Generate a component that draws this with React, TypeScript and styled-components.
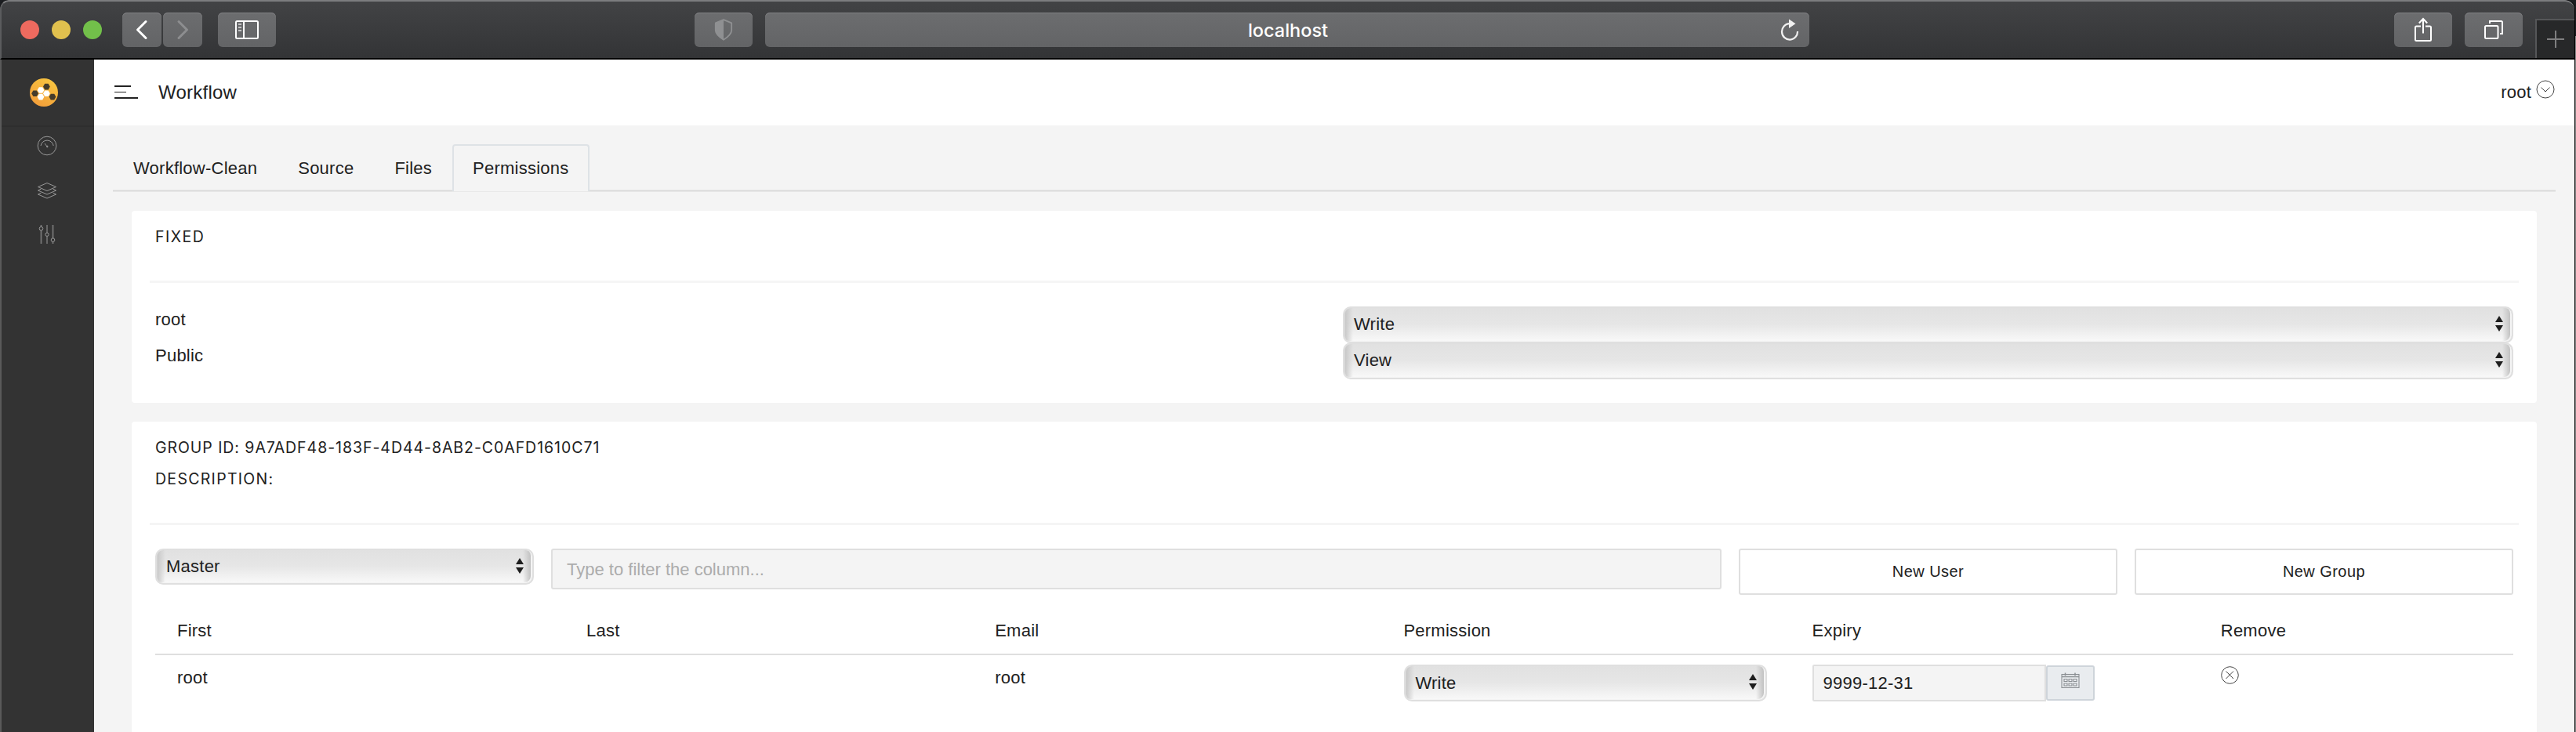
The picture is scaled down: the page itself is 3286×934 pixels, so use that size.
import React from "react";
import styled, { createGlobalStyle, css } from "styled-components";

const GlobalStyle = createGlobalStyle`
  * { box-sizing: border-box; }
  body {
    margin: 0;
    background: #111214;
    overflow: hidden;
    font-family: "Liberation Sans", Arial, sans-serif;
    font-size: 22px;
    letter-spacing: 0.24px;
    color: #212121;
  }
  button, input { font: inherit; letter-spacing: inherit; color: inherit; margin: 0; }
`;

const Desktop = styled.div`
  height: 934px;
  display: flex;
  background: linear-gradient(#1b1d20 0 46px, #8a8a8a 46px);
`;

const Window = styled.div`
  width: 3285px;
  height: 934px;
  display: flex;
  flex-direction: column;
  background: #000;
  border-radius: 11px 12px 0 0;
  overflow: hidden;
  padding-right: 1px;
`;

/* ---- browser chrome ---- */

const Toolbar = styled.header`
  height: 76px;
  flex: none;
  display: flex;
  align-items: flex-start;
  padding: 14px 0 0 24px;
  border-top: 2px solid #7c7d7f;
  border-left: 2px solid #5b5c5e;
  border-bottom: 2px solid #000;
  border-radius: 11px 12px 0 0;
  background: linear-gradient(#424345, #333436);
  color: #fff;
`;

const Light = styled.span<{ $color: string }>`
  width: 24px;
  height: 24px;
  margin: 10px 16px 0 0;
  border-radius: 50%;
  background: ${(p) => p.$color};
`;

const chromeSurface = css`
  height: 44px;
  border: 0;
  border-radius: 6px;
  background: linear-gradient(#6c6d6f, #636466);
  box-shadow: inset 0 1px 0 #808183;
`;

const ChromeButton = styled.button<{ $w: number; $gap?: number }>`
  ${chromeSurface}
  width: ${(p) => p.$w}px;
  margin-left: ${(p) => p.$gap ?? 0}px;
  padding: 0;
  display: flex;
  align-items: center;
  justify-content: center;
`;

const AddressBar = styled.div`
  ${chromeSurface}
  width: 1332px;
  margin-left: 16px;
  display: grid;
  grid-template-columns: 46px 1fr 44px;
  align-items: center;
  text-align: center;
  font-family: Inter, "Liberation Sans", sans-serif;
  font-size: 23.5px;
  font-weight: 500;
  letter-spacing: 0;
`;

const Reload = styled.svg`
  grid-column: 3;
  margin: 0 0 0 7px;
`;

const NewTab = styled.button`
  width: 50px;
  height: 50px;
  margin: 8px 0 0 16px;
  padding: 0;
  border: 0;
  border-top: 2px solid #555658;
  border-left: 2px solid #555658;
  background: #272829;
  display: flex;
  align-items: center;
  justify-content: center;
`;

/* ---- application shell ---- */

const Shell = styled.div`
  flex: 1;
  min-height: 0;
  display: flex;
`;

const Sidebar = styled.nav`
  width: 120px;
  border-left: 2px solid #5a5a5a;
  background: #333;
  display: flex;
  flex-direction: column;
`;

const Brand = styled.div`
  height: 86px;
  border-bottom: 2px solid #2e2e2e;
  padding: 24px 0 0 36px;
`;

const SideLinks = styled.div`
  display: flex;
  flex-direction: column;
  align-items: center;
  padding-right: 3px;
`;

const SideIcon = styled.svg`
  width: 30px;
  height: 30px;
  margin: 9px 0 18px;
  fill: none;
  stroke: #9a9a9a;
  stroke-width: 1;

  & + & { margin-top: 9px; margin-bottom: 17px; }
`;

const Main = styled.main`
  flex: 1;
  min-width: 0;
  display: flex;
  flex-direction: column;
  background: #f4f4f4;
`;

const PageHeader = styled.div`
  height: 84px;
  flex: none;
  display: flex;
  align-items: center;
  padding: 0 25px 0 26px;
  background: #fff;
`;

const PageTitle = styled.h1`
  flex: 1;
  margin: 0 0 0 26px;
  font-size: 24px;
  font-weight: 400;
  line-height: 28px;
`;

const UserMenu = styled.div`
  display: flex;
  align-items: center;
  gap: 6px;
  line-height: 26px;

  svg { margin-bottom: 8px; }
`;

const Tabs = styled.div`
  height: 61px;
  flex: none;
  margin: 24px 24px 0;
  display: flex;
  align-items: flex-start;
  background: linear-gradient(
    transparent 58px, #e8e8e8 58px 59px, #d8d8d8 59px 60px, #e8e8e8 60px
  );
`;

const Tab = styled.a<{ $active?: boolean }>`
  height: 60px;
  padding: 0 24px;
  border: 2px solid transparent;
  border-bottom: 0;
  border-radius: 4px 4px 0 0;
  line-height: 57px;
  ${(p) =>
    p.$active &&
    css`
      border-color: #dee2e6;
      background: #f4f4f4;
    `}
`;

const Card = styled.section<{ $grow?: boolean }>`
  margin: 24px 48px 0;
  padding: 0 30px;
  border-radius: 4px;
  background: #fff;
  ${(p) => (p.$grow ? "flex: 1; border-radius: 4px 4px 0 0;" : "height: 245px; flex: none;")}
`;

const CardHead = styled.div<{ $h: number }>`
  height: ${(p) => p.$h}px;
  margin: 0 -7px;
  padding: 13px 7px 0;
  border-bottom: 3px solid #f5f5f5;
`;

const CardTitle = styled.h2<{ $spacing: number }>`
  margin: 0;
  font-family: Inter, "Liberation Sans", sans-serif;
  font-size: 19.5px;
  font-weight: 400;
  line-height: 40px;
  letter-spacing: ${(p) => p.$spacing}px;
  text-transform: uppercase;
  white-space: nowrap;
`;

const Row = styled.div<{ $top?: number }>`
  display: flex;
  align-items: flex-start;
  margin: ${(p) => p.$top ?? 0}px -11px 0;
`;

const Col = styled.div<{ $span: number }>`
  width: ${(p) => (p.$span / 12) * 100}%;
  padding: 0 11px;
`;

const Label = styled.div`
  line-height: 34px;
  height: 46px;
`;

const SelectBox = styled.button<{ $h?: number }>`
  width: 100%;
  height: ${(p) => p.$h ?? 47}px;
  display: flex;
  align-items: center;
  justify-content: space-between;
  margin-bottom: -1px;
  padding: 0 11px 1px 12px;
  border: 2px solid #dfdfdf;
  border-radius: 10px;
  text-align: left;
  background:
    linear-gradient(to right, #c6c6c6, rgba(214, 214, 214, 0)) 0 0 / 11px 100% no-repeat padding-box,
    linear-gradient(to left, #c2c2c2 2px, rgba(214, 214, 214, 0)) 100% 0 / 12px 100% no-repeat padding-box,
    linear-gradient(#e1e1e1, #e6e6e6 48%, #f9f9f9) padding-box;
  box-shadow: inset -2px -1px 0 #f4f4f4, inset 1px 0 0 #d4d4d4;

  svg { margin-bottom: 2px; }
`;

const FilterInput = styled.input`
  display: block;
  width: 100%;
  height: 52px;
  padding: 2px 19px 0 18px;
  border: 2px solid #dfdfdf;
  border-radius: 3px;
  background: #f4f4f4;
  letter-spacing: 0;
  &::placeholder { color: #acacac; opacity: 1; }
`;

const OutlineButton = styled.button`
  width: 100%;
  height: 59px;
  padding: 0 0 1px;
  border: 2px solid #dfdfdf;
  border-radius: 3px;
  background: #fff;
  font-size: 20px;
  letter-spacing: 0.45px;
`;

const Table = styled.div`
  margin-top: 17px;
`;

const TableRow = styled.div<{ $head?: boolean }>`
  display: grid;
  grid-template-columns: 550px repeat(4, 521.2px) 1fr;
  padding-left: 0;
  ${(p) =>
    p.$head
      ? "height: 60px; line-height: 58px; border-bottom: 2px solid #dfdfdf;"
      : "padding-top: 12px; line-height: 33px;"}

  & > :first-child { padding-left: 28px; }
`;

const Cell = styled.div`
  display: flex;
  align-items: flex-start;
`;

const SelectSlot = styled.div`
  width: 464px;
  padding-left: 1px;
`;

const DateInput = styled.input`
  width: 298px;
  height: 47px;
  padding: 1px 12px 0;
  border: 2px solid #dfdfdf;
  border-radius: 2px 0 0 2px;
  background: #f4f4f4;
`;

const CalendarButton = styled.button`
  width: 62px;
  height: 45px;
  margin-top: 1px;
  padding: 0 0 7px;
  border: 2px solid #ced4da;
  border-radius: 3px;
  background: #e9ecef;
  display: flex;
  align-items: center;
  justify-content: center;
`;

const RemoveIcon = styled.svg`
  margin: 2px 0 0 0;
`;

/* ---- pieces ---- */

function Select({ value, h }: { value: string; h?: number }) {
  return (
    <SelectBox $h={h}>
      <span>{value}</span>
      <svg width="10" height="20" viewBox="0 0 10 20" fill="#1d1d1d">
        <path d="M5 0 10 8H0ZM5 20 10 12H0Z" />
      </svg>
    </SelectBox>
  );
}

const hex = (cx: number, cy: number, r = 4.4) =>
  [0, 60, 120, 180, 240, 300]
    .map((a) => {
      const t = (a * Math.PI) / 180;
      return `${(cx + r * Math.cos(t)).toFixed(2)},${(cy + r * Math.sin(t)).toFixed(2)}`;
    })
    .join(" ");

function Logo() {
  return (
    <svg width="36" height="36" viewBox="0 0 36 36">
      <defs>
        <linearGradient id="amber" x1="0.8" y1="0" x2="0.2" y2="1">
          <stop offset="0" stopColor="#f8c640" />
          <stop offset="1" stopColor="#f29c3a" />
        </linearGradient>
      </defs>
      <circle cx="18" cy="18" r="18" fill="url(#amber)" />
      {[[21.4, 10.6], [6.6, 19.3], [29, 23.6]].map(([x, y]) => (
        <polygon key={x} points={hex(x, y)} fill="#453c2b" />
      ))}
      {[[14, 15], [21.4, 19.2], [14, 23.6]].map(([x, y]) => (
        <polygon key={y} points={hex(x, y)} fill="#fff" />
      ))}
    </svg>
  );
}

function BrowserToolbar() {
  return (
    <Toolbar>
      <Light $color="#ee6a5f" />
      <Light $color="#e0c04e" />
      <Light $color="#72c04a" />
      <ChromeButton $w={50} $gap={10}>
        <svg width="16" height="26" viewBox="0 0 16 26" fill="none" stroke="#fff" strokeWidth="3" strokeLinecap="round" strokeLinejoin="round">
          <path d="M13 2.5 2.5 13 13 23.5" />
        </svg>
      </ChromeButton>
      <ChromeButton $w={50} $gap={2}>
        <svg width="16" height="26" viewBox="0 0 16 26" fill="none" stroke="#8d8e90" strokeWidth="3" strokeLinecap="round" strokeLinejoin="round">
          <path d="M3 2.5 13.5 13 3 23.5" />
        </svg>
      </ChromeButton>
      <ChromeButton $w={74} $gap={20}>
        <svg width="30" height="24" viewBox="0 0 30 24" fill="none" stroke="#fff" strokeWidth="2">
          <rect x="1" y="1" width="28" height="22" rx="1.5" />
          <path d="M11 1V23" />
          <path d="M4 5H8M4 9H8M4 13H8" stroke="#c4c4c5" />
        </svg>
      </ChromeButton>
      <ChromeButton $w={74} $gap={534}>
        <svg width="24" height="28" viewBox="0 0 24 28">
          <path d="M12 1.2 22.2 5.3V14.5C22.2 19.5 17.8 23 12 26.8 6.2 23 1.8 19.5 1.8 14.5V5.3Z" fill="none" stroke="#8f9092" strokeWidth="1.8" strokeLinejoin="round" />
          <path d="M12 1V27C6 23 1.5 19.5 1.5 14.5V5.2Z" fill="#8f9092" />
        </svg>
      </ChromeButton>
      <AddressBar>
        <span />
        <span>localhost</span>
        <Reload width="24" height="28" viewBox="0 0 24 28">
          <path d="M11.5 6.2A10 10.2 0 1 0 22 16" fill="none" stroke="#f1f1f1" strokeWidth="2.2" />
          <path d="M11 0.5 19.5 6.2 11 12Z" fill="#f1f1f1" />
        </Reload>
      </AddressBar>
      <ChromeButton $w={74} $gap={746}>
        <svg width="22" height="32" viewBox="0 0 22 32" fill="none" stroke="#fff" strokeWidth="2">
          <path d="M8 11.5H2.5Q1 11.5 1 13V28.5Q1 30 2.5 30H19.5Q21 30 21 28.5V13Q21 11.5 19.5 11.5H14M11 20.5V2M5.8 7.5 11 2 16.2 7.5" />
        </svg>
      </ChromeButton>
      <ChromeButton $w={74} $gap={16}>
        <svg width="24" height="24" viewBox="0 0 24 24" fill="none" stroke="#fff" strokeWidth="2">
          <rect x="1" y="7" width="16.5" height="16" rx="1.5" />
          <path d="M7 4V1H21.5Q23 1 23 2.5V17H20" />
        </svg>
      </ChromeButton>
      <NewTab>
        <svg width="22" height="22" viewBox="0 0 22 22" stroke="#7f7f80" strokeWidth="2">
          <path d="M11 0V22M0 11H22" />
        </svg>
      </NewTab>
    </Toolbar>
  );
}

function SideNav() {
  return (
    <Sidebar>
      <Brand>
        <Logo />
      </Brand>
      <SideLinks>
        <SideIcon viewBox="0 0 30 30">
          <circle cx="15" cy="15" r="11.8" />
          <path d="M7 15A8.2 8.2 0 0 1 23.2 15M12 12 15 16" />
          <circle cx="15.3" cy="16" r="0.8" fill="#9a9a9a" />
        </SideIcon>
        <SideIcon viewBox="0 0 30 30">
          <path d="M15 5.5 26.5 10.5 15 15.5 3.5 10.5ZM7.5 13 3.5 15 15 20 26.5 15 22.5 13M7.5 18 3.5 20 15 25 26.5 20 22.5 18" />
        </SideIcon>
        <SideIcon viewBox="0 0 30 30">
          <path d="M15 3V13M15 17.5V27" />
          <path d="M7.5 3V5.5M7.5 10V27M22.5 3V20M22.5 24.5V27" strokeWidth="1.8" stroke="#777" />
          <circle cx="7.5" cy="7.7" r="2.3" />
          <circle cx="15" cy="15.2" r="2.2" />
          <circle cx="22.5" cy="22.2" r="2.3" />
        </SideIcon>
      </SideLinks>
    </Sidebar>
  );
}

const columns = ["First", "Last", "Email", "Permission", "Expiry", "Remove"];

export default function App() {
  return (
    <Desktop>
      <GlobalStyle />
      <Window>
        <BrowserToolbar />
        <Shell>
          <SideNav />
          <Main>
            <PageHeader>
              <svg width="30" height="18" viewBox="0 0 30 18" fill="#222">
                <path d="M0 0H21V2H0ZM0 8H15V9H0ZM0 15H30V17H0Z" />
              </svg>
              <PageTitle>Workflow</PageTitle>
              <UserMenu>
                <span>root</span>
                <svg width="24" height="24" viewBox="0 0 24 24" fill="none" stroke="#444" strokeWidth="1">
                  <circle cx="12" cy="12" r="11" />
                  <path d="M6.5 9.5 12 15 17.5 9.5" />
                </svg>
              </UserMenu>
            </PageHeader>

            <Tabs>
              <Tab>Workflow-Clean</Tab>
              <Tab>Source</Tab>
              <Tab>Files</Tab>
              <Tab $active>Permissions</Tab>
            </Tabs>

            <Card>
              <CardHead $h={92}>
                <CardTitle $spacing={1.5}>Fixed</CardTitle>
              </CardHead>
              <Row $top={30}>
                <Col $span={6}>
                  <Label>root</Label>
                  <Label>Public</Label>
                </Col>
                <Col $span={6}>
                  <Select value="Write" />
                  <Select value="View" />
                </Col>
              </Row>
            </Card>

            <Card $grow>
              <CardHead $h={132}>
                <CardTitle $spacing={0.95}>Group ID: 9A7ADF48-183F-4D44-8AB2-C0AFD1610C71</CardTitle>
                <CardTitle $spacing={1.3}>Description:</CardTitle>
              </CardHead>
              <Row $top={30}>
                <Col $span={2}>
                  <Select value="Master" h={46} />
                </Col>
                <Col $span={6}>
                  <FilterInput placeholder="Type to filter the column..." />
                </Col>
                <Col $span={2}>
                  <OutlineButton>New User</OutlineButton>
                </Col>
                <Col $span={2}>
                  <OutlineButton>New Group</OutlineButton>
                </Col>
              </Row>
              <Table>
                <TableRow $head>
                  {columns.map((c) => (
                    <Cell key={c}>{c}</Cell>
                  ))}
                </TableRow>
                <TableRow>
                  <Cell>root</Cell>
                  <Cell />
                  <Cell>root</Cell>
                  <Cell>
                    <SelectSlot>
                      <Select value="Write" />
                    </SelectSlot>
                  </Cell>
                  <Cell>
                    <DateInput defaultValue="9999-12-31" />
                    <CalendarButton>
                      <svg width="24" height="20" viewBox="0 0 24 20" fill="none" stroke="#8b8f93" strokeWidth="1.1">
                        <rect x="1" y="2.5" width="22" height="17" />
                        <path d="M1 5.5H23M5.5 0.5V4M18 0.5V4" strokeWidth="1.5" />
                        <path d="M4 8.5H8V11.5H4ZM10 8.5H14V11.5H10ZM16 8.5H20V11.5H16ZM4 14H8V17H4ZM10 14H14V17H10ZM16 14H20V17H16Z" />
                      </svg>
                    </CalendarButton>
                  </Cell>
                  <Cell>
                    <RemoveIcon width="23" height="23" viewBox="0 0 23 23" fill="none" stroke="#444" strokeWidth="1">
                      <circle cx="11.5" cy="11.5" r="10.8" />
                      <path d="M6.5 6.5 16 16M16 6.5 6.5 16" />
                    </RemoveIcon>
                  </Cell>
                </TableRow>
              </Table>
            </Card>
          </Main>
        </Shell>
      </Window>
    </Desktop>
  );
}
